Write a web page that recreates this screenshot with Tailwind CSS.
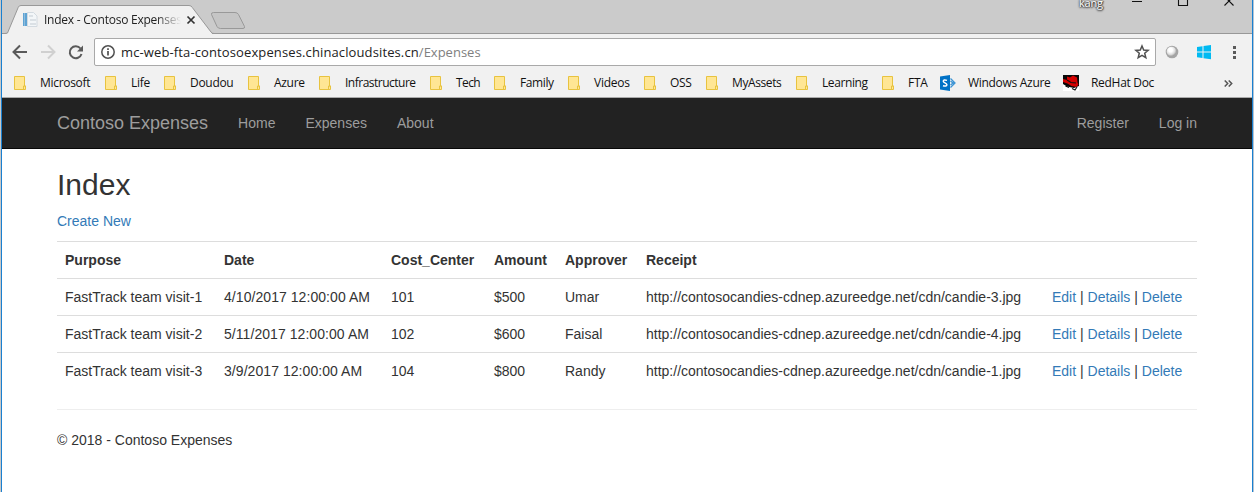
<!DOCTYPE html>
<html lang="en">
<head>
<meta charset="utf-8">
<title>Index - Contoso Expenses</title>
<script src="https://cdn.jsdelivr.net/npm/@tailwindcss/browser@4"></script>
</head>
<body class="h-[492px] overflow-hidden bg-white">
<svg class="hidden">
  <symbol id="folder" viewBox="0 0 12 14"><path d="M.5.5h10v9.5h1v3.5H.5z" fill="#ffe694" stroke="#e8c33f"/><path d="M9.5 13v-3h2" fill="none" stroke="#e8c33f"/></symbol>
</svg>
<div class="h-[492px] flex flex-col border-l border-l-[#c8c8c8] border-r border-r-[#b5c4d2]">
<div class="flex-1 flex flex-col border-x border-[#1a80d0]">

  <!-- Tab strip -->
  <div class="h-[34px] shrink-0 bg-[#cbcbcb] relative font-['Open_Sans',sans-serif]">
    <svg class="absolute inset-0" width="1250" height="34" viewBox="2 0 1250 34" fill="none">
      <path d="M2 33.5H1252" stroke="#989898"/>
      <path d="M5 34.500L7.500 33 18.300 7.200Q19 5.500 21 5.500H189Q191.400 5.500 192.300 7.500L212 33.500V34.500Z" fill="#f1f1f1"/>
      <path d="M5 33.500L7.500 33 18.300 7.200Q19 5.500 21 5.500H189Q191.400 5.500 192.300 7.500L211 32Q212 33.500 214 33.500" stroke="#999"/>
      <path d="M213.500 12.500H235Q237.500 12.500 238.500 14.500L244.500 26.500Q245 28.500 243 28.500H220.500Q218 28.500 217 26.500L211.500 14.500Q211 12.500 213.500 12.500Z" fill="#c5c5c5" stroke="#999"/>
      <!-- page favicon -->
      <path d="M23 13h4v13h-4z" fill="#5fa3d3"/><path d="M24 13h1v13h-1z" fill="#8dbcdd"/>
      <path d="M27.500 12.500h6l3.500 3.500v10.500h-9.500z" fill="#f3f6f8" stroke="#d3dae0"/><path d="M29 16h4M30 20h6M30 24h6" stroke="#c3cbd2"/>
      <path d="M187.500 16.500l7 7m0-7l-7 7" stroke="#333" stroke-width="1.700"/>
      <path d="M1132 1.500h10M1178.500-4v9.500h9V-4M1224.500 5.500l9-9m0 9l-9-9" stroke="#111" stroke-width="1.100"/>
    </svg>
    <span class="absolute left-[42px] top-[12px] w-[137px] overflow-hidden text-[12px] leading-4 tracking-[-0.24px] whitespace-nowrap text-[#222] [mask-image:linear-gradient(to_right,#000_82%,transparent_100%)]">Index - Contoso Expenses</span>
    <span class="absolute left-[1077px] top-[-5px] text-[11px] leading-4 tracking-[-0.2px] text-white [text-shadow:0_0_2px_#333,0_1px_2px_#333,1px_0_1px_#555]">kang</span>
  </div>

  <!-- Toolbar -->
  <div class="h-[35px] shrink-0 bg-[#f1f1f1] flex pt-1 font-['Open_Sans',sans-serif]">
    <svg class="w-[92px] h-[28px] shrink-0" viewBox="2 38 92 28" fill="none">
      <path d="M27 52H14M20 45.500L13.500 52l6.500 6.500" stroke="#5a5a5a" stroke-width="2"/>
      <path d="M41 52h13M48 45.500l6.500 6.500-6.500 6.500" stroke="#d0d0d0" stroke-width="2"/>
      <path d="M80.500 48.500A6 6 0 1 0 81.500 54" stroke="#5a5a5a" stroke-width="2"/><path d="M83 45.500v6h-6z" fill="#5a5a5a"/>
    </svg>
    <div class="w-[1062px] h-[28px] shrink-0 bg-white border border-[#a9a9a9] rounded-[2px] flex items-center pl-[6px] pr-[5px]">
      <svg width="14" height="14" viewBox="0 0 14 14" fill="none"><circle cx="7" cy="7" r="6.200" stroke="#505050" stroke-width="1.500"/><path d="M7 6v4.500M7 3.300v1.600" stroke="#505050" stroke-width="1.700"/></svg>
      <span class="ml-[6px] text-[13px] leading-5 whitespace-nowrap text-[#222]"><span class="tracking-[0.12px]">mc-web-fta-contosoexpenses.chinacloudsites.cn</span><span class="text-[#808080]">/Expenses</span></span>
      <svg class="ml-auto" width="16" height="16" viewBox="0 0 16 16"><path d="M8 2l1.700 4.100 4.400.3-3.400 2.900 1.100 4.300L8 11.300l-3.800 2.300 1.100-4.300L1.900 6.400l4.400-.3z" fill="none" stroke="#505050" stroke-width="1.500"/></svg>
    </div>
    <svg class="w-[96px] h-[28px] shrink-0" viewBox="1156 38 96 28">
      <defs><radialGradient id="orb" cx=".4" cy=".35" r=".65"><stop offset=".3" stop-color="#fff"/><stop offset=".7" stop-color="#dedede"/><stop offset="1" stop-color="#a0a0a0"/></radialGradient></defs>
      <circle cx="1172" cy="52" r="6.300" fill="#a5a5a5"/><circle cx="1171.500" cy="51.500" r="4.800" fill="url(#orb)"/>
      <path d="M1197 47l5.500-.8v5.300h-5.500zM1203.500 46l7.500-1v6.500h-7.500zM1197 52.500h5.500v5.500l-5.500-.7zM1203.500 52.500h7.500v6.800l-7.500-1.100z" fill="#00baf2"/>
      <path d="M1233 46h3v3h-3zM1233 51h3v3h-3zM1233 56h3v3h-3z" fill="#5a5a5a"/>
    </svg>
  </div>

  <!-- Bookmarks bar -->
  <div class="h-[29px] shrink-0 bg-[#f1f1f1] border-b border-[#aaa] flex items-center pl-[12px] font-['Open_Sans',sans-serif] text-[12px] leading-4 text-[#111] whitespace-nowrap">
    <div class="w-[91px] shrink-0 flex items-center gap-[14px]"><svg class="w-3 h-3.5 shrink-0"><use href="#folder"/></svg><span class="tracking-[-0.3px]">Microsoft</span></div>
    <div class="w-[59px] shrink-0 flex items-center gap-[14px]"><svg class="w-3 h-3.5 shrink-0"><use href="#folder"/></svg><span class="tracking-[-0.3px]">Life</span></div>
    <div class="w-[84px] shrink-0 flex items-center gap-[14px]"><svg class="w-3 h-3.5 shrink-0"><use href="#folder"/></svg><span class="tracking-[-0.3px]">Doudou</span></div>
    <div class="w-[71px] shrink-0 flex items-center gap-[14px]"><svg class="w-3 h-3.5 shrink-0"><use href="#folder"/></svg><span class="tracking-[-0.3px]">Azure</span></div>
    <div class="w-[111px] shrink-0 flex items-center gap-[14px]"><svg class="w-3 h-3.5 shrink-0"><use href="#folder"/></svg><span class="tracking-[-0.5px]">Infrastructure</span></div>
    <div class="w-[64px] shrink-0 flex items-center gap-[14px]"><svg class="w-3 h-3.5 shrink-0"><use href="#folder"/></svg><span class="tracking-[-0.6px]">Tech</span></div>
    <div class="w-[74px] shrink-0 flex items-center gap-[14px]"><svg class="w-3 h-3.5 shrink-0"><use href="#folder"/></svg><span class="tracking-[-0.4px]">Family</span></div>
    <div class="w-[76px] shrink-0 flex items-center gap-[14px]"><svg class="w-3 h-3.5 shrink-0"><use href="#folder"/></svg><span class="tracking-[-0.25px]">Videos</span></div>
    <div class="w-[62px] shrink-0 flex items-center gap-[14px]"><svg class="w-3 h-3.5 shrink-0"><use href="#folder"/></svg><span class="tracking-[-0.3px]">OSS</span></div>
    <div class="w-[90px] shrink-0 flex items-center gap-[14px]"><svg class="w-3 h-3.5 shrink-0"><use href="#folder"/></svg><span class="tracking-[-0.4px]">MyAssets</span></div>
    <div class="w-[86px] shrink-0 flex items-center gap-[14px]"><svg class="w-3 h-3.5 shrink-0"><use href="#folder"/></svg><span class="tracking-[-0.4px]">Learning</span></div>
    <div class="w-[58px] shrink-0 flex items-center gap-[14px]"><svg class="w-3 h-3.5 shrink-0"><use href="#folder"/></svg><span class="tracking-[-0.3px]">FTA</span></div>
    <div class="w-[123px] shrink-0 flex items-center gap-3">
      <svg class="w-4 h-4 shrink-0" viewBox="0 0 16 16"><path d="M0 1.500L10 0v16L0 14.500z" fill="#0072c6"/><path d="M7 5.400Q3.300 4.200 3.300 6.200C3.300 8 6.900 7.700 6.900 9.800Q6.800 11.800 3 10.700" fill="none" stroke="#fff" stroke-width="1.500"/><path d="M10.500 3.500L15 8l-4.500 4.500M10.500 6l2.500 2-2.500 2M12 8h3" fill="none" stroke="#3d94d4" stroke-width="1.300"/></svg>
      <span class="tracking-[-0.3px]">Windows Azure</span></div>
    <div class="w-[161px] shrink-0 flex items-center gap-3">
      <svg class="w-4 h-4 shrink-0" viewBox="0 0 16 16"><path d="M0 0h16v15H0z" fill="#080808"/><path d="M0 9l4 2.500 7 1.500 5-2v5H0z" fill="#fff"/><path d="M4 1.500l3 1L10 .5l4 2 .5 5 1 2-2 2.500-5-1-4-2.500L0 7V4l4 1z" fill="#d40000"/><path d="M4 5l4 2.500 5 .5M2.500 11l3.500 1.500M9 13.500l3 1.500 2-3" stroke="#111" stroke-width="1.100" fill="none"/></svg>
      <span class="tracking-[-0.3px]">RedHat Doc</span></div>
    <svg class="w-[9px] h-[7px] shrink-0" viewBox="0 0 9 7"><path d="M.7.500l3 3-3 3M4.700.500l3 3-3 3" fill="none" stroke="#555" stroke-width="1.500"/></svg>
  </div>

  <!-- Site -->
  <div class="flex-1 bg-white font-['Liberation_Sans',Arial,sans-serif] text-[14px] leading-5 text-[#333]">
    <nav class="h-[51px] bg-[#222] border-b border-[#080808] flex items-center px-[55px] text-[#9d9d9d]">
      <a class="text-[18px] mr-[30px]">Contoso Expenses</a>
      <div class="flex gap-[30px]"><a>Home</a><a>Expenses</a><a>About</a></div>
      <div class="flex gap-[30px] ml-auto"><a>Register</a><a>Log in</a></div>
    </nav>
    <main class="px-[55px] pt-[19px]">
      <h2 class="text-[30px] leading-[33px] mb-[10px]">Index</h2>
      <p class="mb-[10px]"><a class="text-[#337ab7]">Create New</a></p>
      <table class="w-[1140px] table-fixed border-collapse text-left">
        <colgroup><col class="w-[159px]"><col class="w-[167px]"><col class="w-[103px]"><col class="w-[71px]"><col class="w-[81px]"><col class="w-[406px]"><col class="w-[153px]"></colgroup>
        <tbody class="[&_td]:p-2 [&_th]:p-2 [&_tr]:border-t [&_tr]:border-[#ddd] [&_a]:text-[#337ab7] whitespace-nowrap">
          <tr><th>Purpose</th><th>Date</th><th>Cost_Center</th><th>Amount</th><th>Approver</th><th>Receipt</th><th></th></tr>
          <tr><td>FastTrack team visit-1</td><td class="tracking-[0.06px]">4/10/2017 12:00:00 AM</td><td>101</td><td>$500</td><td>Umar</td><td>http://contosocandies-cdnep.azureedge.net/cdn/candie-3.jpg</td><td><a>Edit</a> | <a>Details</a> | <a>Delete</a></td></tr>
          <tr><td>FastTrack team visit-2</td><td class="tracking-[0.06px]">5/11/2017 12:00:00 AM</td><td>102</td><td>$600</td><td>Faisal</td><td>http://contosocandies-cdnep.azureedge.net/cdn/candie-4.jpg</td><td><a>Edit</a> | <a>Details</a> | <a>Delete</a></td></tr>
          <tr><td>FastTrack team visit-3</td><td class="tracking-[0.06px]">3/9/2017 12:00:00 AM</td><td>104</td><td>$800</td><td>Randy</td><td>http://contosocandies-cdnep.azureedge.net/cdn/candie-1.jpg</td><td><a>Edit</a> | <a>Details</a> | <a>Delete</a></td></tr>
        </tbody>
      </table>
      <hr class="mt-5 mb-5 border-[#eee]">
      <footer>© 2018 - Contoso Expenses</footer>
    </main>
  </div>
</div>
</div>
</body>
</html>
